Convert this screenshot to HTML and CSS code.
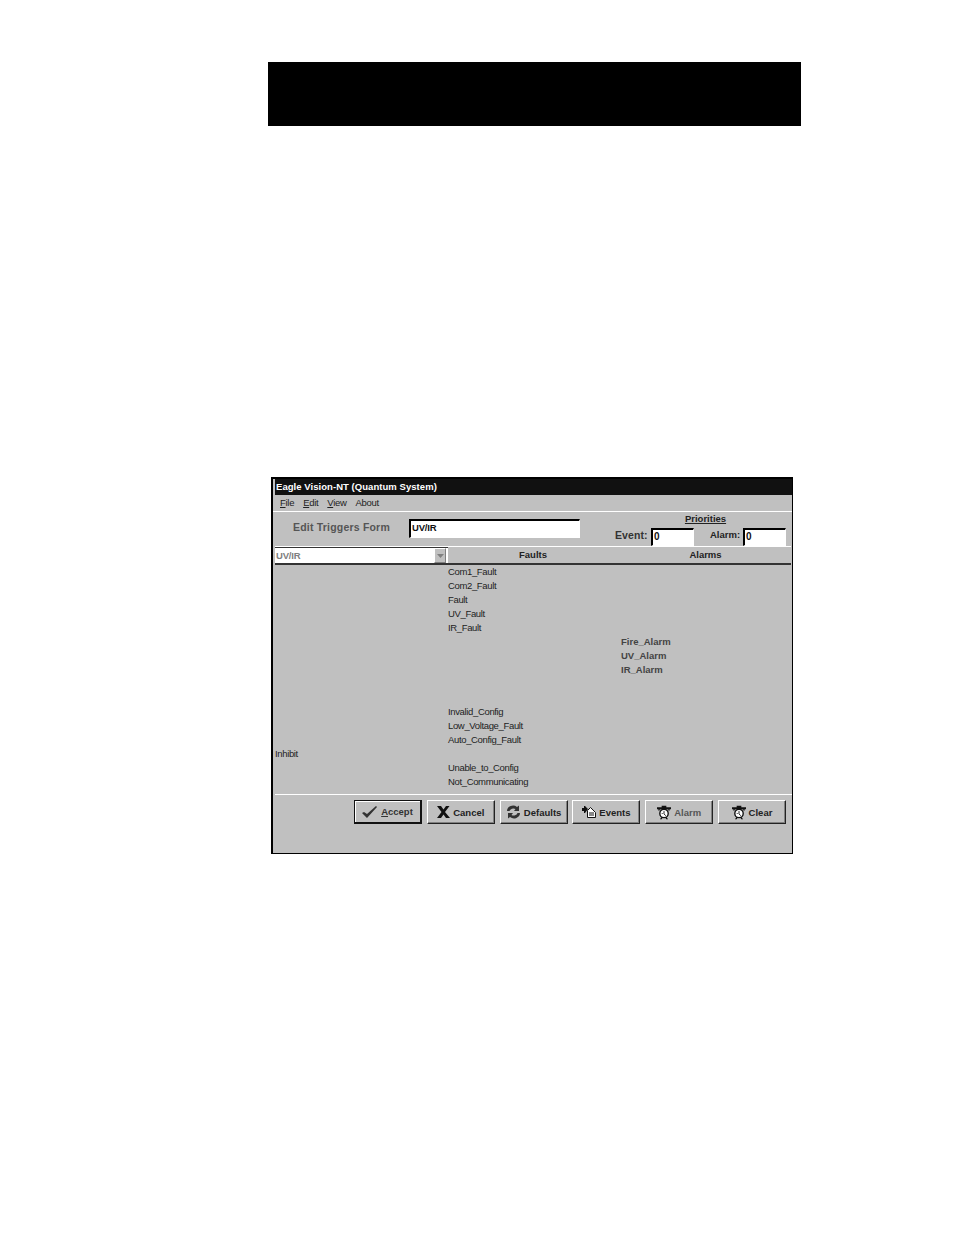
FILE: index.html
```html
<!DOCTYPE html>
<html>
<head>
  <meta charset="utf-8">
  <title>Eagle Vision-NT</title>
  <link rel="stylesheet" href="styles.css">
</head>
<body>
  <div class="page">
    <div class="top-bar"></div>

    <div class="window">
      <div class="title-bar">Eagle Vision-NT (Quantum System)</div>
      <div class="menu-bar">
        <span><u>F</u>ile</span>
        <span><u>E</u>dit</span>
        <span><u>V</u>iew</span>
        <span>About</span>
      </div>

      <div class="form-head">
        <div class="form-title">Edit Triggers Form</div>
        <div class="field name-field">UV/IR</div>
        <div class="priorities">
          <div class="prio-title">Priorities</div>
          <div class="prio-row">
            <label class="event-label">Event:</label>
            <div class="field small-field">0</div>
            <label class="alarm-label">Alarm:</label>
            <div class="field small-field">0</div>
          </div>
        </div>
      </div>

      <div class="col-head">
        <div class="combo">
          <span>UV/IR</span>
          <span class="combo-btn">
            <svg width="7" height="4" viewBox="0 0 7 4"><path d="M0 0h7L3.500 4z" fill="#808080"/></svg>
          </span>
        </div>
        <div class="col-title">Faults</div>
        <div class="col-title">Alarms</div>
      </div>

      <div class="trigger-grid">
        <div></div><div>Com1_Fault</div><div></div>
        <div></div><div>Com2_Fault</div><div></div>
        <div></div><div>Fault</div><div></div>
        <div></div><div>UV_Fault</div><div></div>
        <div></div><div>IR_Fault</div><div></div>
        <div></div><div></div><div class="alarm">Fire_Alarm</div>
        <div></div><div></div><div class="alarm">UV_Alarm</div>
        <div></div><div></div><div class="alarm">IR_Alarm</div>
        <div></div><div></div><div></div>
        <div></div><div></div><div></div>
        <div></div><div>Invalid_Config</div><div></div>
        <div></div><div>Low_Voltage_Fault</div><div></div>
        <div></div><div>Auto_Config_Fault</div><div></div>
        <div>Inhibit</div><div></div><div></div>
        <div></div><div>Unable_to_Config</div><div></div>
        <div></div><div>Not_Communicating</div><div></div>
      </div>

      <div class="button-bar">
        <button class="btn default">
          <svg class="check" width="15" height="12" viewBox="0 0 15 12"><path d="M0 7l2-1 3 2 9-8 1 1L5 12z" fill="#333"/></svg>
          <span><u>A</u>ccept</span>
        </button>
        <button class="btn">
          <svg width="13" height="12" viewBox="0 0 13 12"><path d="M0 0h4l2.500 3.500L9 0h3.500L8 6l5 6H9L6.500 8.500 4 12H0l4.500-6z" fill="#111"/></svg>
          <span>Cancel</span>
        </button>
        <button class="btn">
          <svg width="15" height="14" viewBox="0 0 15 14"><path d="M1 6a6 5.500 0 0 1 10-4l2-1.500V6H8l1.500-2A4 3.500 0 0 0 3.500 6z" fill="#333"/><path d="M14 8a6 5.500 0 0 1-10 4l-2 1.500V8h5L5.500 10a4 3.500 0 0 0 6-2z" fill="#333"/></svg>
          <span>Defaults</span>
        </button>
        <button class="btn">
          <svg width="14" height="12" viewBox="0 0 14 12"><path d="M0 2h2V0h1l3 3-3 4H2V5H0z" fill="#111"/><path d="M5.500 11.500V4.500l3-3 5 5v5z" fill="#fff" stroke="#111"/><path d="M7 7h5M7 9h5" stroke="#111"/></svg>
          <span>Events</span>
        </button>
        <button class="btn">
          <svg width="14" height="15" viewBox="0 0 15 15"><use href="#clock"/></svg>
          <span class="dim">Alarm</span>
        </button>
        <button class="btn">
          <svg width="14" height="15" viewBox="0 0 15 15"><use href="#clock"/></svg>
          <span>Clear</span>
        </button>
      </div>
    </div>
  </div>

  <svg class="defs" width="0" height="0">
    <symbol id="clock" viewBox="0 0 15 15">
      <path d="M0 3h15M5 1h5M7.500 1v2" stroke="#111" stroke-width="2" fill="none"/>
      <path d="M1 4l3 0-2 2zM14 4l-3 0 2 2zM3 15l2-3 1 1-1 2zM12 15l-2-3-1 1 1 2z" fill="#111"/>
      <circle cx="7.500" cy="8.500" r="4.500" fill="#fff" stroke="#111" stroke-width="1.500"/>
      <path d="M7.500 6v3l2 2M5 8l1 1" stroke="#111" fill="none"/>
    </symbol>
  </svg>
</body>
</html>
```
FILE: styles.css
```css
html, body {
  margin: 0;
  padding: 0;
  background-color: #fff;
  font-family: "Liberation Sans", Arial, sans-serif;
}

.page {
  height: 1235px;
  overflow: hidden;
  padding-top: 62px;
  box-sizing: border-box;
}

.top-bar {
  width: 533px;
  height: 64px;
  margin-left: 268px;
  background-color: #000;
}

.window {
  width: 522px;
  height: 377px;
  margin: 351px 0 0 271px;
  box-sizing: border-box;
  background-color: #c0c0c0;
  border: 1px solid #000;
  border-left-width: 2px;
  border-top-width: 2px;
  padding: 0 0 0 2px;
  font-size: 10px;
  color: #222;
}

.title-bar {
  height: 16px;
  line-height: 15px;
  background-color: #111;
  color: #fff;
  font-weight: bold;
  font-size: 9.500px;
  letter-spacing: .05px;
  padding-left: 1px;
}

.menu-bar {
  display: flex;
  gap: 9px;
  height: 16px;
  line-height: 16px;
  font-size: 9.500px;
  letter-spacing: -.3px;
  border-bottom: 1px solid #fff;
  margin-left: -2px;
  padding-left: 7px;
}

.form-head {
  display: flex;
  height: 34px;
  border-bottom: 1px solid #fff;
  margin-right: 1px;
}

.form-title {
  width: 116px;
  padding: 9px 0 0 18px;
  font-size: 10.500px;
  font-weight: bold;
  color: #555;
  letter-spacing: .2px;
  white-space: nowrap;
}

.field {
  background-color: #fff;
  border: 1px solid #fff;
  border-top: 2px solid #000;
  border-left: 2px solid #000;
  box-sizing: border-box;
  font-weight: bold;
  color: #111;
  line-height: 14px;
  padding-left: 1px;
}

.name-field {
  width: 171px;
  height: 19px;
  margin-top: 7px;
  font-size: 9.500px;
  letter-spacing: -.2px;
}

.priorities {
  width: 171px;
  margin-left: 35px;
}

.prio-title {
  text-align: center;
  font-weight: bold;
  font-size: 9.500px;
  text-decoration: underline;
  line-height: 13px;
  margin-left: 10px;
}

.prio-row {
  display: flex;
  align-items: flex-start;
  margin-top: 3px;
}

.prio-row label {
  font-weight: bold;
  line-height: 14px;
  white-space: nowrap;
}

.event-label {
  width: 36px;
  font-size: 10.500px;
  letter-spacing: .1px;
  color: #333;
}

.alarm-label {
  width: 33px;
  margin-left: 16px;
  font-size: 9.500px;
}

.small-field {
  width: 43px;
  height: 18px;
}

.col-head {
  display: grid;
  grid-template-columns: 173px 173px 172px;
  height: 16px;
  border-bottom: 2px solid #333;
  margin-right: 1px;
}

.combo {
  display: flex;
  justify-content: space-between;
  background-color: #fff;
  border-top: 1px solid #333;
  line-height: 15px;
  color: #808080;
  font-weight: bold;
  font-size: 9.500px;
  letter-spacing: -.2px;
  padding: 0 2px 0 1px;
}

.combo-btn {
  width: 12px;
  height: 15px;
  background-color: #c0c0c0;
  border: 1px solid;
  border-color: #fff #808080 #808080 #fff;
  box-sizing: border-box;
  display: flex;
  align-items: center;
  justify-content: center;
}

.col-title {
  text-align: center;
  font-weight: bold;
  font-size: 9.500px;
  line-height: 16px;
  padding-right: 3px;
}

.trigger-grid {
  display: grid;
  grid-template-columns: 173px 173px 172px;
  grid-auto-rows: 14px;
  padding-bottom: 5px;
  border-bottom: 1px solid #fff;
  line-height: 14px;
  font-size: 9.500px;
  letter-spacing: -.35px;
  color: #222;
}

.trigger-grid .alarm {
  font-weight: bold;
  letter-spacing: 0;
  color: #444;
}

.button-bar {
  display: flex;
  gap: 4.800px;
  padding: 5px 0 0 79px;
}

.btn {
  width: 68px;
  height: 24px;
  padding: 0;
  display: flex;
  align-items: center;
  justify-content: center;
  gap: 3px;
  background-color: #c0c0c0;
  border: 1px solid;
  border-color: #fff #222 #222 #fff;
  box-shadow: inset -1px -1px 0 #808080;
  font-family: inherit;
  font-size: 9.500px;
  font-weight: bold;
  color: #222;
}

.btn.default {
  border: 2px solid #111;
  border-top-width: 1px;
  border-left-width: 1px;
  box-shadow: inset 1px 1px 0 #fff;
  gap: 4px;
  color: #333;
}

.btn .dim {
  color: #555;
}

.defs {
  position: absolute;
}
```
